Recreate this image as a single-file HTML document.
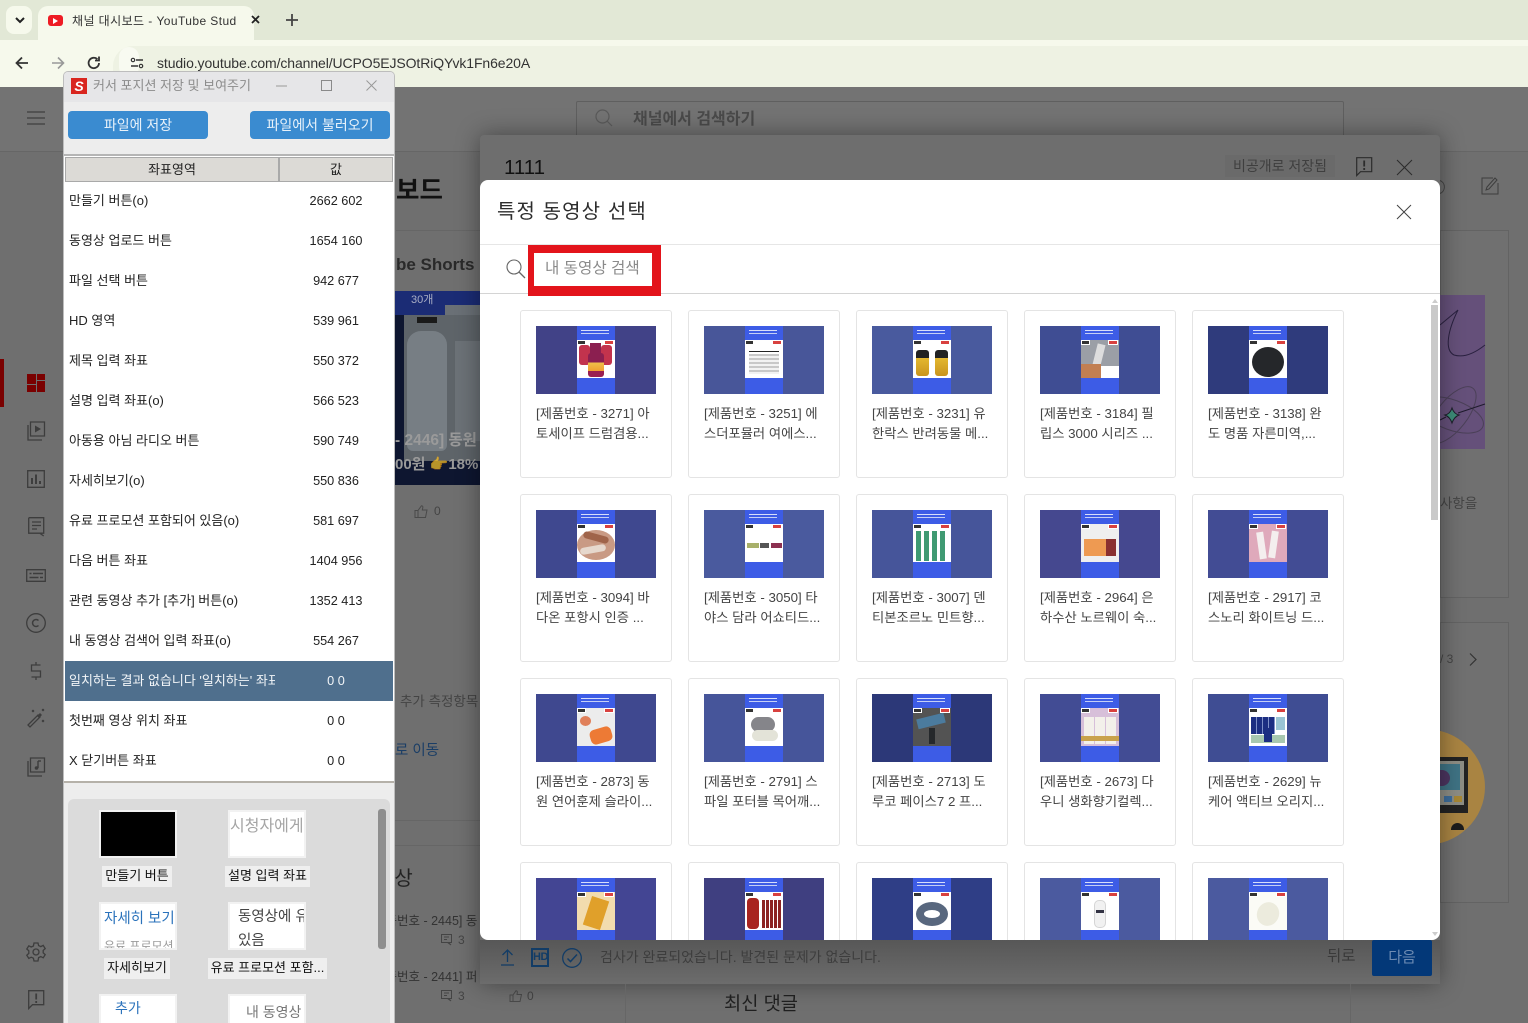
<!DOCTYPE html>
<html lang="ko"><head><meta charset="utf-8"><title>채널 대시보드 - YouTube Studio</title>
<style>
*{box-sizing:border-box}
html,body{margin:0;padding:0;width:1528px;height:1023px;overflow:hidden;background:#6f6f6f;font-family:"Liberation Sans","Noto Sans CJK KR",sans-serif;color:#222}
.a{position:absolute;white-space:nowrap}
svg{position:absolute;overflow:visible}
.card{position:absolute;width:152px;height:168px;border:1px solid #e4e4e4;border-radius:3px;background:#fff}
.th{position:absolute;left:15px;top:15px;width:120px;height:68px;background:#46529a;overflow:hidden}
.c{position:absolute;left:41px;top:0;width:38px;height:68px;background:#3d5ce6}
.w{position:absolute;left:0;top:14px;width:38px;height:38px;background:#fff;overflow:hidden}
.w::before{content:"";position:absolute;left:1px;top:1px;width:7px;height:3px;background:#333;z-index:2;box-shadow:0 0 0 1px #fff}
.w::after{content:"";position:absolute;left:28px;top:1px;width:8px;height:3px;background:#d8413f;z-index:2;box-shadow:0 0 0 1px #fff}
.l{position:absolute;left:4px;top:4px;width:28px;height:1px;background:#d7defa;box-shadow:0 3px 0 #c5cff6}
.pill{position:absolute;left:7px;top:47px;width:24px;height:3px;border-radius:2px;background:#555;z-index:2}
.p{position:absolute}
.tt{position:absolute;left:15px;top:92.500px;width:130px;font-size:13.300px;line-height:20px;color:#444;white-space:nowrap}
.r{position:absolute;left:1px;width:328px;height:40px;font-size:13px;line-height:40px;color:#222}
.r b{font-weight:400;position:absolute;left:4px;width:206px;overflow:hidden;white-space:nowrap}
.r i{font-style:normal;position:absolute;left:212px;width:118px;text-align:center;font-size:12.700px}
.tile{position:absolute;width:78px;background:#fff;border:2px solid #f2f2f2;overflow:hidden;white-space:nowrap}
.lb{position:absolute;height:21px;background:#efefef;font-size:13px;line-height:20px;color:#111;text-align:center;white-space:nowrap}
.ic{fill:none;stroke:#3d3d3d;stroke-width:1.3}
</style></head><body>

<!-- browser chrome -->
<div class="a" style="left:0;top:0;width:1528px;height:40px;background:#e2e8d6"></div>
<div class="a" style="left:6px;top:6px;width:26px;height:28px;border-radius:8px;background:#f6f9ec"></div>
<svg style="left:14px;top:15px" width="12" height="10"><path d="M2 3l4 4 4-4" fill="none" stroke="#222" stroke-width="2"/></svg>
<div class="a" style="left:38px;top:6px;width:216px;height:36px;border-radius:10px 10px 0 0;background:#f6f9ec"></div>
<div class="a" style="left:48px;top:15px;width:15px;height:11px;border-radius:3px;background:#ee1c24"></div>
<div class="a" style="left:53px;top:17.500px;width:0;height:0;border-left:5px solid #fff;border-top:3px solid transparent;border-bottom:3px solid transparent"></div>
<div class="a" style="left:72px;top:12px;width:165px;overflow:hidden;font-size:12px;line-height:18px;letter-spacing:.42px;color:#333">채널 대시보드 - YouTube Studio</div>
<svg style="left:251px;top:15px" width="10" height="10"><path d="M1 1l7 7M8 1l-7 7" stroke="#222" stroke-width="1.800"/></svg>
<svg style="left:286px;top:14px" width="12" height="12"><path d="M6 0v12M0 6h12" stroke="#444" stroke-width="1.800"/></svg>
<div class="a" style="left:0;top:40px;width:1528px;height:47px;background:#f6f9ec"></div>
<div class="a" style="left:113px;top:46px;width:1415px;height:41px;border-radius:20px 0 0 0;background:#eef2e3"></div>
<svg style="left:15px;top:56px" width="14" height="14"><path d="M13 7H2M7 1.500L1.500 7 7 12.500" fill="none" stroke="#333" stroke-width="1.800"/></svg>
<svg style="left:51px;top:56px" width="14" height="14"><path d="M1 7h11M7 1.500L12.500 7 7 12.500" fill="none" stroke="#999" stroke-width="1.600"/></svg>
<svg style="left:87px;top:56px" width="14" height="14"><path d="M12 7a5.200 5.200 0 1 1-1.600-3.800M12 .5v4H8" fill="none" stroke="#333" stroke-width="1.800"/></svg>
<div class="a" style="left:119px;top:47px;width:20px;height:30px;border-radius:10px;background:#f8faf1"></div>
<svg style="left:131px;top:58px" width="12" height="10"><path d="M5 2h7M0 8h7" stroke="#333" stroke-width="1.500"/><circle cx="2" cy="2" r="1.700" fill="none" stroke="#333" stroke-width="1.200"/><circle cx="10" cy="8" r="1.700" fill="none" stroke="#333" stroke-width="1.200"/></svg>
<div class="a" style="left:157px;top:53px;font-size:14px;line-height:20px;letter-spacing:-.1px;color:#333">studio.youtube.com/channel/UCPO5EJSOtRiQYvk1Fn6e20A</div>

<!-- dimmed page behind -->
<div class="a" style="left:0;top:87px;width:1528px;height:936px;background:#6f6f6f"></div>
<div class="a" style="left:0;top:87px;width:1528px;height:65px;background:#737373;border-bottom:1px solid #666"></div>
<svg style="left:27px;top:111px" width="18" height="14"><path d="M0 1h18M0 7h18M0 13h18" stroke="#3f3f3f" stroke-width="1.200"/></svg>
<div class="a" style="left:576px;top:101px;width:768px;height:50px;border:1px solid #5f5f5f;border-radius:2px"></div>
<svg style="left:595px;top:109px" width="18" height="18"><circle cx="7.500" cy="7.500" r="6.500" fill="none" stroke="#5a5a5a" stroke-width="1.200"/><path d="M12 12l5 5" stroke="#5a5a5a" stroke-width="1.200"/></svg>
<div class="a" style="left:633px;top:108px;font-size:16px;line-height:23px;font-weight:700;color:#4a4a4a">채널에서 검색하기</div>

<!-- sidebar -->
<div class="a" style="left:0;top:359px;width:4px;height:48px;background:#7a0000"></div>
<svg style="left:27px;top:374px" width="18" height="18"><path d="M0 0h9v10H0zM10 0h8v6h-8zM0 11h9v7H0zM10 7h8v11h-8z" fill="#7a0000"/></svg>
<svg style="left:27px;top:421px" width="18" height="20"><g class="ic"><path d="M3.500 1h14v14h-14z"/><path d="M1 4v15h14"/></g><path d="M8 4.500l6 3.500-6 3.500z" fill="#3d3d3d"/></svg>
<svg style="left:27px;top:470px" width="18" height="18"><path class="ic" d="M.7.7h16.600v16.600H.7z"/><path d="M5 8v6M9 4.500V14M13 11v3" stroke="#3d3d3d" stroke-width="2"/></svg>
<svg style="left:28px;top:517px" width="17" height="20"><path class="ic" d="M.7.7h15v15.500h-4L15.700 19M11.700 16.200H.7V.7"/><path d="M4 5h9M4 8.500h9M4 12h5" stroke="#3d3d3d" stroke-width="1.300"/></svg>
<svg style="left:26px;top:569px" width="20" height="13"><path class="ic" d="M.7.7h18.600v11.600H.7z"/><path d="M3.500 4.500h2M7 4.500h10M3.500 8.500h9M14 8.500h3" stroke="#3d3d3d" stroke-width="1.500"/></svg>
<svg style="left:26px;top:613px" width="20" height="20"><circle cx="10" cy="10" r="9.300" class="ic"/><path d="M12.500 7.500a3.500 3.500 0 1 0 0 5" fill="none" stroke="#3d3d3d" stroke-width="1.500"/></svg>
<svg style="left:30px;top:661px" width="12" height="20"><path class="ic" d="M10.500 4H1.500v6h9v6h-9M6 1v3M6 16v3"/></svg>
<svg style="left:27px;top:709px" width="19" height="19"><path class="ic" d="M1 16L11 6l2 2L3 18z"/><path d="M10 7l3-3 2 2-3 3z" fill="#3d3d3d"/><path d="M5 1l2 2M7 1L5 3M15 0l2 2M17 0l-2 2M15 11l2 2M17 11l-2 2" stroke="#3d3d3d" stroke-width="1"/></svg>
<svg style="left:27px;top:757px" width="18" height="20"><g class="ic"><path d="M3.500 1h14v14h-14z"/><path d="M1 4v15h14"/></g><path d="M11 4v7" stroke="#3d3d3d" stroke-width="1.400"/><circle cx="9.500" cy="11" r="1.800" fill="#3d3d3d"/><path d="M11 4h3" stroke="#3d3d3d" stroke-width="1.400"/></svg>
<svg style="left:26px;top:942px" width="20" height="20"><circle cx="10" cy="10" r="3" class="ic"/><path class="ic" d="M8 1h4l.6 2.600 2.200 1 2.400-1.200 2 3.200-2 1.800v2.400l2 1.800-2 3.200-2.400-1.200-2.200 1L12 19H8l-.6-2.800-2.200-1-2.400 1.200-2-3.200 2-1.800V8.800l-2-1.800 2-3.200 2.400 1.200 2.200-1z"/></svg>
<svg style="left:28px;top:990px" width="17" height="20"><path class="ic" d="M.7.7h15v14H4.500L.7 18.500z"/><path d="M8.200 3.500v6M8.200 11v2" stroke="#3d3d3d" stroke-width="1.800"/></svg>

<!-- dashboard fragments -->
<div class="a" style="left:396px;top:174px;font-size:25.500px;line-height:34px;font-weight:700;color:#111">보드</div>
<div class="a" style="left:396px;top:230px;width:84px;height:1px;background:#666"></div>
<div class="a" style="left:396px;top:254px;font-size:17px;line-height:22px;font-weight:700;color:#2a2a2a">be Shorts</div>
<div class="a" style="left:395px;top:291px;width:85px;height:194px;background:#0e1630;overflow:hidden">
 <div class="a" style="left:0;top:0;width:85px;height:24px;background:#1b2c75"></div>
 <div class="a" style="left:16px;top:0;font-size:11px;color:#a9aec4">30개</div>
 <div class="a" style="left:9px;top:24px;width:76px;height:146px;background:#5e6469"></div>
 <div class="a" style="left:50px;top:14px;width:35px;height:10px;background:#6a7076"></div>
 <div class="a" style="left:12px;top:40px;width:40px;height:120px;border-radius:14px 14px 6px 6px;background:#777e84"></div>
 <div class="a" style="left:22px;top:26px;width:20px;height:6px;background:#1a1a1a"></div>
 <div class="a" style="left:60px;top:50px;width:25px;height:100px;background:#6c7277"></div>
 <div class="a" style="left:0;top:140px;font-size:15.500px;line-height:20px;font-weight:700;color:#9a9a9a">- 2446] 동원</div>
 <div class="a" style="left:0;top:164px;font-size:15px;line-height:20px;font-weight:700;color:#9a9a9a">00원 <span style="opacity:.7">👉</span>18%</div>
</div>
<svg style="left:414px;top:505px" width="14" height="13"><path d="M1 5.500h3v7H1zM4 5.500L7.500.7c1.200 0 1.500 1 1.300 2L8.300 5H13l-1.500 7.500H4" fill="none" stroke="#4a4a4a" stroke-width="1"/></svg>
<div class="a" style="left:434px;top:503px;font-size:12px;line-height:16px;color:#444">0</div>
<div class="a" style="left:400px;top:694px;font-size:13.500px;line-height:16px;color:#444">추가 측정항목</div>
<div class="a" style="left:395px;top:742px;font-size:14.500px;line-height:18px;color:#1b3e66">로 이동</div>
<div class="a" style="left:395px;top:820px;width:85px;height:1px;background:#666"></div>
<div class="a" style="left:395px;top:845px;width:85px;height:1px;background:#666"></div>
<div class="a" style="left:376px;top:867px;font-size:20px;line-height:24px;color:#222">영상</div>
<div class="a" style="left:385.500px;top:912px;font-size:12.500px;line-height:18px;color:#333">품번호 - 2445] 동</div>
<div class="a" style="left:385.500px;top:968px;font-size:12.500px;line-height:18px;color:#333">품번호 - 2441] 퍼</div>
<svg style="left:441px;top:934px" width="11" height="12"><path d="M.5.500h10v8H7.500L10 11 6.500 8.500H.5zM3 3h5M3 5.500h3" fill="none" stroke="#444" stroke-width="1"/></svg>
<div class="a" style="left:458px;top:932px;font-size:12px;line-height:16px;color:#444">3</div>
<svg style="left:441px;top:990px" width="11" height="12"><path d="M.5.500h10v8H7.500L10 11 6.500 8.500H.5zM3 3h5M3 5.500h3" fill="none" stroke="#444" stroke-width="1"/></svg>
<div class="a" style="left:458px;top:988px;font-size:12px;line-height:16px;color:#444">3</div>
<svg style="left:509px;top:990px" width="13" height="12"><path d="M1 5h3v6.500H1zM4 5L7 .7c1.200 0 1.500 1 1.300 2L8 4.500h4.500l-1.500 7H4" fill="none" stroke="#4a4a4a" stroke-width="1"/></svg>
<div class="a" style="left:527px;top:988px;font-size:12px;line-height:16px;color:#444">0</div>

<!-- right fragments -->
<div class="a" style="left:1440px;top:230px;width:69px;height:368px;border:1px solid #636363;background:#707070"></div>
<div class="a" style="left:1440px;top:295px;width:45px;height:154px;background:#65507a"></div>
<svg style="left:1440px;top:295px" width="45" height="154"><path d="M0 30L18 15C8 35 4 55 14 60C24 63 35 58 45 50" fill="none" stroke="#2a2140" stroke-width="1"/><ellipse cx="12" cy="120" rx="33" ry="15" transform="rotate(20 12 120)" fill="none" stroke="#4b4058"/><ellipse cx="12" cy="120" rx="34" ry="15" transform="rotate(-52 12 120)" fill="none" stroke="#4b4058"/><path d="M12 113q2 6 7 7q-5 2-7 8q-2-6-7-8q5-1 7-7z" fill="#3d8c78" stroke="#1c1c28"/><path d="M0 125l6-3M18 118q12-4 27-9" fill="none" stroke="#1e1a2c"/></svg>
<div class="a" style="left:1440px;top:496px;font-size:13.500px;line-height:16px;color:#444">사항을</div>
<div class="a" style="left:1440px;top:622px;width:69px;height:281px;border:1px solid #636363;background:#707070"></div>
<div class="a" style="left:1440px;top:651px;font-size:12px;line-height:16px;color:#444">/ 3</div>
<svg style="left:1469px;top:653px" width="9" height="13"><path d="M1 .5l6 6-6 6" fill="none" stroke="#333" stroke-width="1.200"/></svg>
<div class="a" style="left:1365px;top:729px;width:120px;height:116px;border-radius:50%;background:#a98442"></div>
<div class="a" style="left:1440px;top:757px;width:28px;height:56px;background:#222"></div>
<div class="a" style="left:1440px;top:761px;width:24px;height:44px;background:#8d8d84"></div>
<div class="a" style="left:1440px;top:764px;width:20px;height:26px;background:#3f7384"></div>
<div class="a" style="left:1440px;top:770px;width:10px;height:16px;border-radius:0 8px 8px 0;background:#4c3560"></div>
<div class="a" style="left:1444px;top:796px;width:8px;height:6px;background:#3d6d9a"></div>
<div class="a" style="left:1454px;top:796px;width:8px;height:6px;background:#a78734"></div>
<div class="a" style="left:1451px;top:823px;width:13px;height:7px;border-radius:7px 7px 0 0;background:#1c1c1c"></div>
<svg style="left:1481px;top:177px" width="18" height="18"><path d="M17 6v11H1V1h11" fill="none" stroke="#3d3d3d"/><path d="M5 13l1-3 8-9 2 2-8 9z" fill="none" stroke="#3d3d3d"/></svg>
<svg style="left:1440px;top:180px" width="5" height="14"><path d="M0 .5a7 7 0 0 1 0 13" fill="none" stroke="#444"/></svg>

<!-- upload dialog behind -->
<div class="a" style="left:480px;top:135px;width:960px;height:849px;background:#6e6e6e;border-radius:4px;box-shadow:0 0 24px rgba(0,0,0,.4)"></div>
<div class="a" style="left:504px;top:155px;font-size:20.500px;line-height:25px;color:#111">1111</div>
<div class="a" style="left:1225px;top:155px;width:110px;height:22px;background:#6a6a6a"></div>
<div class="a" style="left:1233px;top:157px;font-size:14px;line-height:18px;color:#3f3f3f">비공개로 저장됨</div>
<svg style="left:1356px;top:157px" width="17" height="20"><path d="M.7.7h15v14H4.500L.7 18.500z" fill="none" stroke="#2c2c2c" stroke-width="1.200"/><path d="M8.200 3.500v6M8.200 11v2" stroke="#2c2c2c" stroke-width="1.800"/></svg>
<svg style="left:1397px;top:160px" width="15" height="15"><path d="M0 0l15 15M15 0L0 15" stroke="#2c2c2c" stroke-width="1"/></svg>
<div class="a" style="left:480px;top:940px;width:960px;height:44px;background:linear-gradient(#575757,#6c6c6c)"></div>
<svg style="left:501px;top:949px" width="13" height="17"><path d="M6.500 13V1M1.500 6L6.500 1l5 5M0 16h13" fill="none" stroke="#123c66" stroke-width="1.300"/></svg>
<div class="a" style="left:531px;top:948px;width:18px;height:19px;border:2px solid #123c66;font-size:11px;line-height:15px;font-weight:700;color:#123c66;text-align:center;letter-spacing:-.5px">HD</div>
<svg style="left:562px;top:948px" width="20" height="20"><circle cx="10" cy="10" r="9.300" fill="none" stroke="#123c66" stroke-width="1.300"/><path d="M5.500 10.500l3 3L15 6.500" fill="none" stroke="#123c66" stroke-width="1.500"/></svg>
<div class="a" style="left:600px;top:948px;font-size:14px;line-height:18px;color:#3d3d3d">검사가 완료되었습니다. 발견된 문제가 없습니다.</div>
<div class="a" style="left:1327px;top:947px;font-size:15.500px;line-height:20px;color:#3a3a3a">뒤로</div>
<div class="a" style="left:1372px;top:940px;width:60px;height:36px;background:#033878;border-radius:2px;font-size:15px;line-height:35px;color:#6e8cb3;text-align:center">다음</div>
<div class="a" style="left:724px;top:991px;font-size:18.700px;line-height:25px;color:#1f1f1f">최신 댓글</div>
<div class="a" style="left:625px;top:984px;width:1px;height:39px;background:#666"></div>
<div class="a" style="left:1350px;top:984px;width:1px;height:39px;background:#666"></div>

<!-- selection modal -->
<div class="a" style="left:480px;top:180px;width:960px;height:760px;background:#fff;border-radius:8px;overflow:hidden">
 <div class="a" style="left:17px;top:18px;font-size:20px;line-height:28px;color:#2d2d2d;letter-spacing:1.100px">특정 동영상 선택</div>
 <svg style="left:917px;top:25px" width="14" height="14"><path d="M0 0l14 14M14 0L0 14" stroke="#444" stroke-width="1"/></svg>
 <div class="a" style="left:0;top:64px;width:960px;height:1px;background:#e6e6e6"></div>
 <div class="a" style="left:0;top:113px;width:960px;height:1px;background:#d4d4d4"></div>
 <svg style="left:26px;top:79px" width="20" height="20"><circle cx="8" cy="8" r="7" fill="none" stroke="#666" stroke-width="1.100"/><path d="M13 13l6 6" stroke="#666" stroke-width="1.300"/></svg>
 <div class="a" style="left:48px;top:65px;width:133px;height:51px;border:solid #e3141b;border-width:8px 9px 10px 6px;background:#fff"></div>
 <div class="a" style="left:65px;top:79px;font-size:15.600px;line-height:20px;color:#8a8a8a">내 동영상 검색</div>
 <div class="a" style="left:951px;top:125px;width:7px;height:215px;background:#c9c9c9"></div>
 <div class="a" style="left:952px;top:119px;width:0;height:0;border-left:3px solid transparent;border-right:3px solid transparent;border-bottom:4px solid #ccc"></div>
 <div class="a" style="left:952px;top:752px;width:0;height:0;border-left:3px solid transparent;border-right:3px solid transparent;border-top:4px solid #ccc"></div>

 <!-- row 1 -->
 <div class="card" style="left:40px;top:130px"><div class="th" style="background:#414287"><div class="c"><div class="l"></div><div class="w"><div class="p" style="left:2px;top:5px;width:11px;height:20px;border-radius:3px;background:#c2334d"></div><div class="p" style="left:24px;top:5px;width:11px;height:20px;border-radius:3px;background:#c2334d"></div><div class="p" style="left:13px;top:3px;width:11px;height:16px;background:#8b1f50"></div><div class="p" style="left:11px;top:13px;width:16px;height:24px;border-radius:3px;background:linear-gradient(#8b1f50 40%,#f0c04a 40%,#f0a030 75%,#9a1f50 75%)"></div><div class="pill"></div></div></div></div><div class="tt">[제품번호 - 3271] 아<br>토세이프 드럼겸용...</div></div>
 <div class="card" style="left:208px;top:130px"><div class="th" style="background:#485699"><div class="c"><div class="l"></div><div class="w"><div class="p" style="left:4px;top:11px;width:30px;height:1px;background:#222"></div><div class="p" style="left:4px;top:14px;width:30px;height:20px;background:repeating-linear-gradient(#c8c8c8 0 2px,#f2f2f2 2px 4px)"></div><div class="pill"></div></div></div></div><div class="tt">[제품번호 - 3251] 에<br>스더포뮬러 여에스...</div></div>
 <div class="card" style="left:376px;top:130px"><div class="th" style="background:#495a9e"><div class="c"><div class="l"></div><div class="w"><div class="p" style="left:3px;top:10px;width:13px;height:26px;border-radius:3px;background:linear-gradient(#222 30%,#e4b830 30%,#c9941d)"></div><div class="p" style="left:22px;top:10px;width:13px;height:26px;border-radius:3px;background:linear-gradient(#222 30%,#e4b830 30%,#c9941d)"></div><div class="pill"></div></div></div></div><div class="tt">[제품번호 - 3231] 유<br>한락스 반려동물 메...</div></div>
 <div class="card" style="left:544px;top:130px"><div class="th" style="background:#3f4d93"><div class="c"><div class="l"></div><div class="w" style="background:#9b9fa6"><div class="p" style="left:14px;top:4px;width:8px;height:22px;transform:rotate(14deg);background:#ddd"></div><div class="p" style="left:0;top:24px;width:20px;height:14px;background:#c27f52"></div><div class="p" style="left:20px;top:26px;width:18px;height:12px;background:#fff"></div><div class="pill"></div></div></div></div><div class="tt">[제품번호 - 3184] 필<br>립스 3000 시리즈 ...</div></div>
 <div class="card" style="left:712px;top:130px"><div class="th" style="background:#2f3b7c"><div class="c"><div class="l"></div><div class="w"><div class="p" style="left:3px;top:7px;width:32px;height:30px;border-radius:50%;background:#25272a"></div><div class="pill"></div></div></div></div><div class="tt">[제품번호 - 3138] 완<br>도 명품 자른미역,...</div></div>
 <!-- row 2 -->
 <div class="card" style="left:40px;top:314px"><div class="th" style="background:#3f488f"><div class="c"><div class="l"></div><div class="w"><div class="p" style="left:0;top:6px;width:38px;height:30px;border-radius:50%;background:#c99a84"></div><div class="p" style="left:6px;top:10px;width:26px;height:7px;border-radius:4px;background:#a0644a;transform:rotate(15deg)"></div><div class="p" style="left:3px;top:22px;width:26px;height:7px;border-radius:4px;background:#e6d8cd;transform:rotate(-10deg)"></div><div class="pill"></div></div></div></div><div class="tt">[제품번호 - 3094] 바<br>다온 포항시 인증 ...</div></div>
 <div class="card" style="left:208px;top:314px"><div class="th" style="background:#4a5a9e"><div class="c"><div class="l"></div><div class="w"><div class="p" style="left:2px;top:19px;width:12px;height:5px;background:#a8b06a"></div><div class="p" style="left:15px;top:19px;width:9px;height:5px;background:#555"></div><div class="p" style="left:26px;top:19px;width:11px;height:5px;background:#8c3050"></div><div class="pill"></div></div></div></div><div class="tt">[제품번호 - 3050] 타<br>야스 담라 어쇼티드...</div></div>
 <div class="card" style="left:376px;top:314px"><div class="th" style="background:#46559a"><div class="c"><div class="l"></div><div class="w"><div class="p" style="left:3px;top:7px;width:32px;height:30px;background:repeating-linear-gradient(90deg,#3f9a72 0 5px,#fff 5px 8px)"></div><div class="pill"></div></div></div></div><div class="tt">[제품번호 - 3007] 덴<br>티본조르노 민트향...</div></div>
 <div class="card" style="left:544px;top:314px"><div class="th" style="background:#45488f"><div class="c"><div class="l"></div><div class="w" style="background:#efefef"><div class="p" style="left:3px;top:15px;width:22px;height:17px;background:#ee9a52"></div><div class="p" style="left:25px;top:15px;width:10px;height:17px;background:#8a3030"></div><div class="pill"></div></div></div></div><div class="tt">[제품번호 - 2964] 은<br>하수산 노르웨이 숙...</div></div>
 <div class="card" style="left:712px;top:314px"><div class="th" style="background:#424c94"><div class="c"><div class="l"></div><div class="w" style="background:#dfa9bb"><div class="p" style="left:9px;top:8px;width:7px;height:27px;background:#f4eeee;transform:rotate(-8deg)"></div><div class="p" style="left:21px;top:7px;width:7px;height:27px;background:#f4eeee;transform:rotate(8deg)"></div><div class="pill"></div></div></div></div><div class="tt">[제품번호 - 2917] 코<br>스노리 화이트닝 드...</div></div>
 <!-- row 3 -->
 <div class="card" style="left:40px;top:498px"><div class="th" style="background:#3f488f"><div class="c"><div class="l"></div><div class="w" style="background:#ececec"><div class="p" style="left:3px;top:8px;width:11px;height:10px;border-radius:50%;background:#e0805a"></div><div class="p" style="left:13px;top:20px;width:22px;height:15px;border-radius:5px;background:#ed7a35;transform:rotate(-16deg)"></div><div class="pill"></div></div></div></div><div class="tt">[제품번호 - 2873] 동<br>원 연어훈제 슬라이...</div></div>
 <div class="card" style="left:208px;top:498px"><div class="th" style="background:#46559a"><div class="c"><div class="l"></div><div class="w"><div class="p" style="left:6px;top:9px;width:24px;height:15px;border-radius:8px;background:#85858a"></div><div class="p" style="left:7px;top:22px;width:26px;height:11px;border-radius:6px;background:#e3e3d8"></div><div class="pill"></div></div></div></div><div class="tt">[제품번호 - 2791] 스<br>파일 포터블 목어깨...</div></div>
 <div class="card" style="left:376px;top:498px"><div class="th" style="background:#2c3878"><div class="c"><div class="l"></div><div class="w" style="background:#535353"><div class="p" style="left:4px;top:8px;width:28px;height:10px;background:#4b7b9e;transform:rotate(-14deg)"></div><div class="p" style="left:16px;top:20px;width:6px;height:16px;background:#25282b"></div><div class="pill"></div></div></div></div><div class="tt">[제품번호 - 2713] 도<br>루코 페이스7 2 프...</div></div>
 <div class="card" style="left:544px;top:498px"><div class="th" style="background:#424c94"><div class="c"><div class="l"></div><div class="w" style="background:#d7bfd9"><div class="p" style="left:3px;top:9px;width:10px;height:27px;background:#f3f0ea"></div><div class="p" style="left:14px;top:9px;width:10px;height:27px;background:#f3f0ea"></div><div class="p" style="left:25px;top:9px;width:10px;height:27px;background:#f3f0ea"></div><div class="p" style="left:0;top:28px;width:38px;height:5px;background:#c9a24b"></div><div class="pill"></div></div></div></div><div class="tt">[제품번호 - 2673] 다<br>우니 생화향기컬렉...</div></div>
 <div class="card" style="left:712px;top:498px"><div class="th" style="background:#3f4d93"><div class="c"><div class="l"></div><div class="w"><div class="p" style="left:2px;top:9px;width:24px;height:17px;background:repeating-linear-gradient(90deg,#1c2e82 0 5px,#7f90c8 5px 6px)"></div><div class="p" style="left:27px;top:9px;width:9px;height:13px;background:#9ac4d4"></div><div class="p" style="left:2px;top:27px;width:34px;height:8px;background:#a8c8b0"></div><div class="p" style="left:15px;top:20px;width:8px;height:14px;background:#1c2e82"></div><div class="pill"></div></div></div></div><div class="tt">[제품번호 - 2629] 뉴<br>케어 액티브 오리지...</div></div>
 <!-- row 4 -->
 <div class="card" style="left:40px;top:682px"><div class="th" style="background:#434593"><div class="c"><div class="l"></div><div class="w" style="background:#f2dcae"><div class="p" style="left:10px;top:6px;width:18px;height:30px;background:#e0a02a;transform:rotate(18deg)"></div><div class="pill"></div></div></div></div></div>
 <div class="card" style="left:208px;top:682px"><div class="th" style="background:#3f3f80"><div class="c"><div class="l"></div><div class="w"><div class="p" style="left:2px;top:6px;width:12px;height:31px;border-radius:4px;background:#a8241f"></div><div class="p" style="left:17px;top:8px;width:19px;height:28px;background:repeating-linear-gradient(90deg,#8c2322 0 3px,#fff 3px 4px)"></div><div class="pill"></div></div></div></div></div>
 <div class="card" style="left:376px;top:682px"><div class="th" style="background:#2f3e86"><div class="c"><div class="l"></div><div class="w"><div class="p" style="left:3px;top:10px;width:32px;height:24px;border:8px solid #58677e;border-radius:50%;background:#fff"></div><div class="pill"></div></div></div></div></div>
 <div class="card" style="left:544px;top:682px"><div class="th" style="background:#4b5a9f"><div class="c"><div class="l"></div><div class="w"><div class="p" style="left:13px;top:8px;width:12px;height:28px;border-radius:5px;background:#f1f1f1;border:1px solid #d5d5d5"></div><div class="p" style="left:15px;top:18px;width:8px;height:3px;background:#334"></div><div class="pill"></div></div></div></div></div>
 <div class="card" style="left:712px;top:682px"><div class="th" style="background:#4b5a9f"><div class="c"><div class="l"></div><div class="w" style="background:#fbfbf6"><div class="p" style="left:8px;top:10px;width:22px;height:24px;border-radius:50%;background:#ecebdd;transform:rotate(25deg)"></div><div class="pill"></div></div></div></div></div>
</div>

<!-- tool window -->
<div class="a" style="left:63px;top:71px;width:332px;height:952px;background:#ededed;border:1px solid #bdbdbd;border-bottom:0;border-radius:5px 5px 0 0;overflow:hidden">
 <div class="a" style="left:0;top:0;width:330px;height:30px;background:#e6e6e8"></div>
 <div class="a" style="left:7px;top:6px;width:16px;height:16px;background:#d9261f;color:#fff;font-size:14px;line-height:16px;font-weight:700;font-style:italic;text-align:center">S</div>
 <div class="a" style="left:29px;top:4px;font-size:13px;line-height:20px;color:#8c8c8c">커서 포지션 저장 및 보여주기</div>
 <svg style="left:212px;top:13px" width="11" height="2"><path d="M0 1h11" stroke="#999"/></svg>
 <svg style="left:257px;top:8px" width="11" height="11"><path d="M.5.500h10v10H.5z" fill="none" stroke="#8a8a8a"/></svg>
 <svg style="left:302px;top:8px" width="11" height="11"><path d="M.5.500l10 10M10.500.500l-10 10" stroke="#999"/></svg>
 <div class="a" style="left:4px;top:39px;width:140px;height:28px;background:#3a8bd0;border-radius:4px;color:#e8f2fa;font-size:14px;line-height:28px;text-align:center">파일에 저장</div>
 <div class="a" style="left:186px;top:39px;width:140px;height:28px;background:#3a8bd0;border-radius:4px;color:#e8f2fa;font-size:14px;line-height:28px;text-align:center">파일에서 불러오기</div>
 <div class="a" style="left:0;top:82px;width:330px;height:629px;background:#fff;border-top:2px solid #b5b5b5;border-bottom:2px solid #b5b1a9"></div>
 <div class="a" style="left:1px;top:85px;width:214px;height:25px;background:#dcdad6;border:1px solid #a9a9a9;font-size:13px;line-height:23px;text-align:center;color:#222">좌표영역</div>
 <div class="a" style="left:215px;top:85px;width:114px;height:25px;background:#dcdad6;border:1px solid #a9a9a9;font-size:13px;line-height:23px;text-align:center;color:#222">값</div>

 <div class="r" style="top:109px"><b>만들기 버튼(o)</b><i>2662 602</i></div>
 <div class="r" style="top:149px"><b>동영상 업로드 버튼</b><i>1654 160</i></div>
 <div class="r" style="top:189px"><b>파일 선택 버튼</b><i>942 677</i></div>
 <div class="r" style="top:229px"><b>HD 영역</b><i>539 961</i></div>
 <div class="r" style="top:269px"><b>제목 입력 좌표</b><i>550 372</i></div>
 <div class="r" style="top:309px"><b>설명 입력 좌표(o)</b><i>566 523</i></div>
 <div class="r" style="top:349px"><b>아동용 아님 라디오 버튼</b><i>590 749</i></div>
 <div class="r" style="top:389px"><b>자세히보기(o)</b><i>550 836</i></div>
 <div class="r" style="top:429px"><b>유료 프로모션 포함되어 있음(o)</b><i>581 697</i></div>
 <div class="r" style="top:469px"><b>다음 버튼 좌표</b><i>1404 956</i></div>
 <div class="r" style="top:509px"><b>관련 동영상 추가 [추가] 버튼(o)</b><i>1352 413</i></div>
 <div class="r" style="top:549px"><b>내 동영상 검색어 입력 좌표(o)</b><i>554 267</i></div>
 <div class="r" style="top:589px;background:#4f6f8d;color:#f2f5f8"><b>일치하는 결과 없습니다 '일치하는' 좌표</b><i>0 0</i></div>
 <div class="r" style="top:629px"><b>첫번째 영상 위치 좌표</b><i>0 0</i></div>
 <div class="r" style="top:669px"><b>X 닫기버튼 좌표</b><i>0 0</i></div>

 <div class="a" style="left:4px;top:727px;width:322px;height:233px;background:#dbdbdb;border-radius:6px 6px 0 0"></div>
 <div class="a" style="left:314px;top:737px;width:8px;height:140px;background:#8e8e8e;border-radius:3px"></div>

 <div class="tile" style="left:35px;top:738px;height:48px;background:#000;border-color:#f2f2f2"></div>
 <div class="tile" style="left:164px;top:738px;height:48px;font-size:16px;line-height:29px;color:#a5a5a5">시청자에게</div>
 <div class="lb" style="left:38px;top:794px;width:70px">만들기 버튼</div>
 <div class="lb" style="left:161px;top:794px;width:85px">설명 입력 좌표</div>

 <div class="tile" style="left:35px;top:830px;height:48px;font-size:14.500px;line-height:30px;color:#2a72bb;padding-left:3px">자세히 보기<div class="a" style="left:3px;top:32px;color:#9c9c9c;font-size:12px;line-height:20px">유료 프로모션</div></div>
 <div class="tile" style="left:164px;top:830px;height:48px;font-size:14.500px;line-height:24px;color:#444;padding:1px 0 0 8px">동영상에 유<br>있음</div>
 <div class="lb" style="left:40px;top:886px;width:66px">자세히보기</div>
 <div class="lb" style="left:144px;top:886px;width:119px">유료 프로모션 포함...</div>

 <div class="tile" style="left:35px;top:922px;height:40px;font-size:14px;line-height:24px;color:#2a72bb;padding-left:14px">추가</div>
 <div class="tile" style="left:164px;top:922px;height:40px;font-size:14px;line-height:32px;color:#777;padding-left:16px">내 동영상</div>
</div>
</body></html>
